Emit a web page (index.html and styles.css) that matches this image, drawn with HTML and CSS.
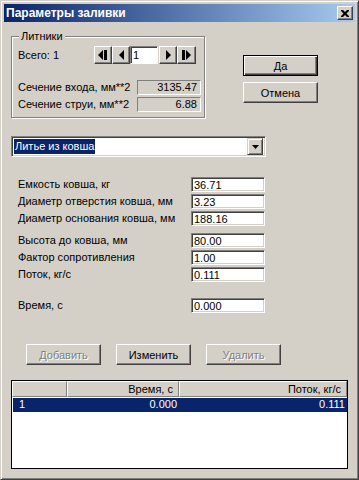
FILE: index.html
```html
<!DOCTYPE html>
<html lang="ru">
<head>
    <meta charset="UTF-8">
    <title>Параметры заливки</title>
    <link rel="stylesheet" href="styles.css">
</head>
<body>
<div class="window">
    <div class="titlebar">
        <span class="title">Параметры заливки</span>
        <button type="button" class="close">
            <svg width="8" height="7" viewBox="0 0 8 7"><path d="M0 0h2l2 2 2-2h2v1l-2.5 2.5 2.5 2.5v1h-2l-2-2-2 2h-2v-1l2.5-2.5-2.5-2.5z" fill="#000"/></svg>
        </button>
    </div>

    <div class="content">
        <div class="top">
            <div class="group">
                <div class="group-title">Литники</div>
                <div class="count-row">
                    <span class="count-label">Всего: 1</span>
                    <div class="nav">
                        <button type="button" class="nav-btn">
                            <svg width="10" height="10" viewBox="0 0 10 10"><path d="M5 0v10L0 5z M6 0h3v10h-3z" fill="#000"/></svg>
                        </button>
                        <button type="button" class="nav-btn">
                            <svg width="5" height="10" viewBox="0 0 5 10"><path d="M5 0v10L0 5z" fill="#000"/></svg>
                        </button>
                        <div class="nav-edit">1</div>
                        <button type="button" class="nav-btn">
                            <svg width="5" height="10" viewBox="0 0 5 10"><path d="M0 0v10L5 5z" fill="#000"/></svg>
                        </button>
                        <button type="button" class="nav-btn last">
                            <svg width="10" height="10" viewBox="0 0 10 10"><path d="M0 0h3v10h-3z M4 0v10L9 5z" fill="#000"/></svg>
                        </button>
                    </div>
                </div>
                <div class="info-row first">
                    <span class="info-label">Сечение входа, мм**2</span>
                    <div class="readonly">3135.47</div>
                </div>
                <div class="info-row">
                    <span class="info-label">Сечение струи, мм**2</span>
                    <div class="readonly">6.88</div>
                </div>
            </div>

            <div class="dialog-buttons">
                <button type="button" class="btn default">Да</button>
                <button type="button" class="btn">Отмена</button>
            </div>
        </div>

        <div class="combo">
            <span class="combo-value">Литье из ковша</span>
            <span class="combo-arrow">
                <svg width="7" height="4" viewBox="0 0 7 4"><path d="M0 0h7L3.5 4z" fill="#000"/></svg>
            </span>
        </div>

        <div class="fields first">
            <div class="field-row">
                <span class="field-label">Емкость ковша, кг</span>
                <div class="input">36.71</div>
            </div>
            <div class="field-row">
                <span class="field-label">Диаметр отверстия ковша, мм</span>
                <div class="input">3.23</div>
            </div>
            <div class="field-row">
                <span class="field-label">Диаметр основания ковша, мм</span>
                <div class="input">188.16</div>
            </div>
        </div>

        <div class="fields second">
            <div class="field-row">
                <span class="field-label">Высота до ковша, мм</span>
                <div class="input">80.00</div>
            </div>
            <div class="field-row">
                <span class="field-label">Фактор сопротивления</span>
                <div class="input">1.00</div>
            </div>
            <div class="field-row">
                <span class="field-label">Поток, кг/с</span>
                <div class="input">0.111</div>
            </div>
        </div>

        <div class="fields third">
            <div class="field-row">
                <span class="field-label">Время, с</span>
                <div class="input">0.000</div>
            </div>
        </div>

        <div class="actions">
            <button type="button" class="btn disabled">Добавить</button>
            <button type="button" class="btn">Изменить</button>
            <button type="button" class="btn disabled">Удалить</button>
        </div>

        <div class="list">
            <div class="list-head">
                <div class="head-cell"></div>
                <div class="head-cell">Время, с</div>
                <div class="head-cell">Поток, кг/с</div>
            </div>
            <div class="list-row selected">
                <div class="cell left">1</div>
                <div class="cell">0.000</div>
                <div class="cell">0.111</div>
            </div>
        </div>
    </div>
</div>
</body>
</html>
```

FILE: styles.css
```css
* {
    box-sizing: border-box;
}

body {
    margin: 0;
    font-family: "Liberation Sans", Arial, sans-serif;
    font-size: 11px;
    line-height: 13px;
    color: #000;
    background-color: #d4d0c8;
}

button {
    font-family: inherit;
    font-size: inherit;
    color: inherit;
    margin: 0;
    padding: 0;
}

/* Fensterrahmen */
.window {
    width: 359px;
    height: 480px;
    background-color: #d4d0c8;
    border: 1px solid;
    border-color: #d4d0c8 #404040 #404040 #d4d0c8;
    box-shadow: inset 1px 1px #fff, inset -1px -1px #808080;
    padding: 3px;
}

.titlebar {
    height: 18px;
    display: flex;
    align-items: center;
    justify-content: space-between;
    padding: 0 2px 0 2px;
    background: linear-gradient(to right, #0a246a, #a6caf0);
}

.title {
    color: #fff;
    font-weight: bold;
    font-size: 12px;
}

.close {
    width: 16px;
    height: 14px;
    display: flex;
    align-items: center;
    justify-content: center;
    background-color: #d4d0c8;
    border: 1px solid;
    border-color: #fff #404040 #404040 #fff;
    box-shadow: inset -1px -1px #808080;
}

.content {
    padding-left: 7px;
}

/* obere Zeile */
.top {
    display: flex;
    margin-top: 14px;
}

.group {
    width: 194px;
    border: 1px solid #808080;
    box-shadow: inset 1px 1px #fff, 1px 1px #fff;
    padding: 0 0 5px 6px;
}

.group-title {
    width: fit-content;
    margin: -7px 0 0 1px;
    padding: 0 2px;
    background-color: #d4d0c8;
}

.count-row {
    display: flex;
    align-items: center;
    height: 18px;
    margin-top: 3px;
}

.count-label {
    width: 76px;
}

.nav {
    display: flex;
    height: 18px;
}

.nav-btn {
    width: 18px;
    height: 18px;
    display: flex;
    align-items: center;
    justify-content: center;
    background-color: #d4d0c8;
    border: 1px solid;
    border-color: #fff #404040 #404040 #fff;
    box-shadow: inset -1px -1px #808080;
}

.nav-btn.last {
    width: 19px;
}

.nav-edit {
    width: 28px;
    height: 18px;
    margin-right: 1px;
    background-color: #fff;
    border: 1px solid;
    border-color: #808080 #fff #fff #808080;
    box-shadow: inset 1px 1px #404040;
    padding: 2px 0 0 2px;
}

.info-row {
    display: flex;
    align-items: center;
    height: 15px;
    margin-top: 2px;
}

.info-row.first {
    margin-top: 16px;
}

.info-label {
    width: 119px;
}

.readonly {
    width: 64px;
    height: 15px;
    border: 1px solid;
    border-color: #808080 #fff #fff #808080;
    text-align: right;
    padding-right: 3px;
}

.dialog-buttons {
    display: flex;
    flex-direction: column;
    gap: 6px;
    margin: 19px 0 0 38px;
}

.btn {
    width: 75px;
    height: 21px;
    background-color: #d4d0c8;
    border: 1px solid;
    border-color: #fff #404040 #404040 #fff;
    box-shadow: inset -1px -1px #808080;
}

.btn.default {
    border-color: #000;
    box-shadow: inset 1px 1px #fff, inset -1px -1px #404040, inset -2px -2px #808080;
}

.btn.disabled {
    color: #808080;
    text-shadow: 1px 1px #fff;
}

/* Auswahlfeld */
.combo {
    display: flex;
    width: 255px;
    height: 21px;
    margin-top: 18px;
    background-color: #fff;
    border: 1px solid;
    border-color: #808080 #fff #fff #808080;
    box-shadow: inset 1px 1px #404040, inset -1px -1px #d4d0c8;
    padding: 1px 2px 1px 1px;
}

.combo-value {
    align-self: flex-start;
    margin: 1px 0 0 1px;
    padding: 0 1px;
    line-height: 15px;
    background-color: #0a246a;
    color: #fff;
}

.combo-arrow {
    margin-left: auto;
    width: 16px;
    height: 17px;
    display: flex;
    align-items: center;
    justify-content: center;
    background-color: #d4d0c8;
    border: 1px solid;
    border-color: #d4d0c8 #404040 #404040 #d4d0c8;
    box-shadow: inset 1px 1px #fff, inset -1px -1px #808080;
}

/* Eingabefelder */
.fields {
    padding-left: 7px;
}

.fields.first {
    margin-top: 20px;
}

.fields.second {
    margin-top: 7px;
}

.fields.third {
    margin-top: 16px;
}

.field-row {
    display: flex;
    align-items: center;
    height: 15px;
    margin-top: 2px;
}

.field-row:first-child {
    margin-top: 0;
}

.field-label {
    width: 173px;
}

.input {
    width: 74px;
    height: 15px;
    background-color: #fff;
    border: 1px solid;
    border-color: #808080 #fff #fff #808080;
    box-shadow: inset 1px 1px #404040, inset -1px -1px #d4d0c8;
    padding: 1px 0 0 2px;
}

.actions {
    display: flex;
    gap: 15px;
    margin-top: 31px;
    padding-left: 15px;
}

/* Liste */
.list {
    width: 337px;
    height: 89px;
    margin-top: 15px;
    background-color: #fff;
    border: 1px solid #000;
}

.list-head {
    display: grid;
    grid-template-columns: 55px 112px 1fr;
    height: 16px;
}

.head-cell {
    background-color: #d4d0c8;
    border: 1px solid;
    border-color: #fff #808080 #808080 #fff;
    text-align: right;
    padding: 1px 5px 0 0;
}

.list-row {
    display: grid;
    grid-template-columns: 54px 112px 1fr;
    height: 14px;
    margin: 1px 0 0 1px;
}

.list-row.selected {
    background-color: #0a246a;
    color: #fff;
}

.cell {
    text-align: right;
    padding: 0 2px 0 0;
}

.cell.left {
    text-align: left;
    padding-left: 6px;
}
```
